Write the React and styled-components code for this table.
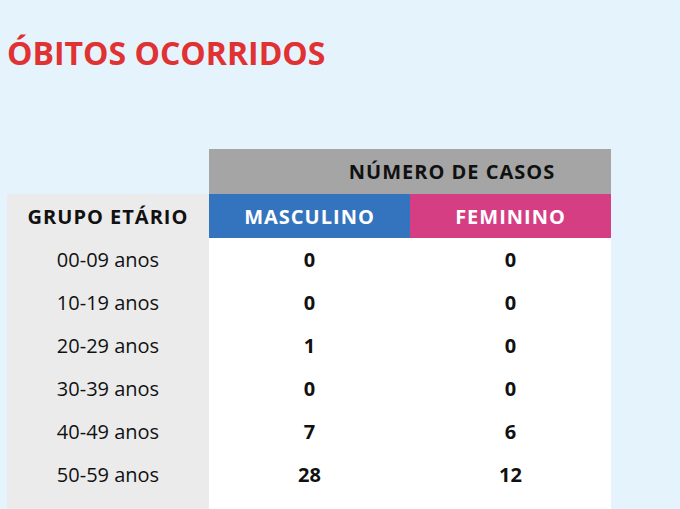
import React from "react";
import styled, { createGlobalStyle } from "styled-components";

const GlobalStyle = createGlobalStyle`
    html, body {
        margin: 0;
        padding: 0;
        background: #e5f3fd;
        font-family: "Open Sans", "Liberation Sans", sans-serif;
    }
`

const Page = styled.div`
    width: 680px;
    height: 509px;
    overflow: hidden;
    padding: 34px 7px 0;
    box-sizing: border-box;
`

const Title = styled.h1`
    margin: 0;
    font-size: 32px;
    line-height: 38px;
    font-weight: 700;
    color: #e03232;
`

const Table = styled.div`
    margin-top: 77px;
    display: grid;
    grid-template-columns: 202px 201px 201px;
    grid-auto-rows: 43px;
    grid-template-rows: 45px 44px;
`

const Cell = styled.div`
    display: flex;
    align-items: center;
    justify-content: center;
    font-size: 20px;
    color: #111;
    background: ${p => p.bg || "#ffffff"};
    font-weight: ${p => (p.bold ? 700 : 400)};
`

const Blank = styled.div``

const GroupTop = styled(Cell)`
    grid-column: 2 / span 2;
    background: #a5a5a5;
    font-weight: 700;
    letter-spacing: 1px;
    padding-left: 84px;
`

const HeadCell = styled(Cell)`
    font-weight: 700;
    letter-spacing: 1px;
    color: ${p => p.fg || "#111"};
`

const rows = [
    ["00-09 anos", 0, 0],
    ["10-19 anos", 0, 0],
    ["20-29 anos", 1, 0],
    ["30-39 anos", 0, 0],
    ["40-49 anos", 7, 6],
    ["50-59 anos", 28, 12],
    ["", "", ""],
]

export default function App() {
    return (
        <>
            <GlobalStyle />
            <Page>
                <Title>ÓBITOS OCORRIDOS</Title>
                <Table>
                    <Blank />
                    <GroupTop>NÚMERO DE CASOS</GroupTop>
                    <HeadCell bg="#ebebeb">GRUPO ETÁRIO</HeadCell>
                    <HeadCell bg="#3474bf" fg="#ffffff">MASCULINO</HeadCell>
                    <HeadCell bg="#d53e83" fg="#ffffff">FEMININO</HeadCell>
                    {rows.map((r, i) => (
                        <React.Fragment key={i}>
                            <Cell bg="#ebebeb">{r[0]}</Cell>
                            <Cell bold>{r[1]}</Cell>
                            <Cell bold>{r[2]}</Cell>
                        </React.Fragment>
                    ))}
                </Table>
            </Page>
        </>
    )
}
